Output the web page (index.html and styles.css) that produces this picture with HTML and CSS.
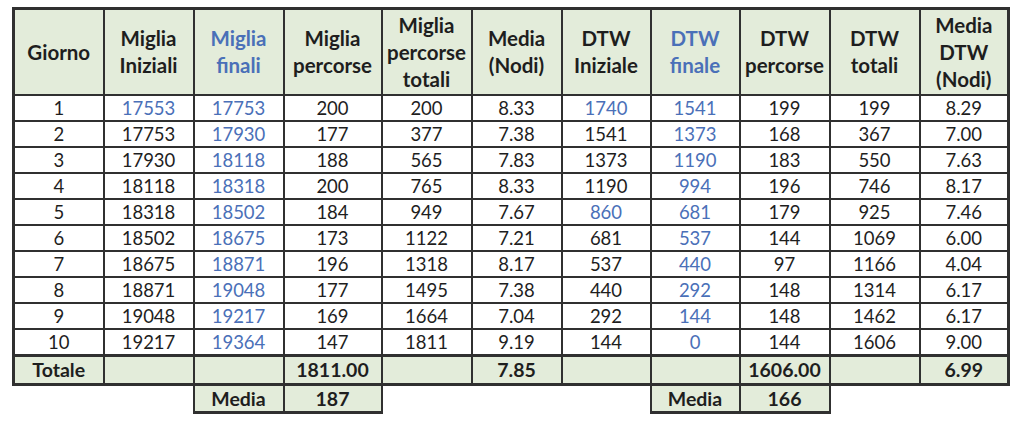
FILE: index.html
```html
<!DOCTYPE html>
<html lang="it">
<head>
<meta charset="utf-8">
<title>Tabella miglia</title>
<link rel="stylesheet" href="styles.css">
</head>
<body>
<div class="wrap">
<table class="log">
<colgroup>
<col class="c90"><col class="c90"><col class="c90"><col class="c98"><col class="c90"><col class="c90"><col class="c89"><col class="c89"><col class="c90"><col class="c90"><col class="c89">
</colgroup>
<thead>
<tr class="head">
<th class="first">Giorno</th>
<th>Miglia<br>Iniziali</th>
<th class="blue">Miglia<br>finali</th>
<th>Miglia<br>percorse</th>
<th>Miglia<br>percorse<br>totali</th>
<th>Media<br>(Nodi)</th>
<th>DTW<br>Iniziale</th>
<th class="blue">DTW<br>finale</th>
<th>DTW<br>percorse</th>
<th>DTW<br>totali</th>
<th class="last">Media<br>DTW<br>(Nodi)</th>
</tr>
</thead>
<tbody>
<tr><td class="first">1</td><td class="blue">17553</td><td class="blue">17753</td><td>200</td><td>200</td><td>8.33</td><td class="blue">1740</td><td class="blue">1541</td><td>199</td><td>199</td><td class="last">8.29</td></tr>
<tr><td class="first">2</td><td>17753</td><td class="blue">17930</td><td>177</td><td>377</td><td>7.38</td><td>1541</td><td class="blue">1373</td><td>168</td><td>367</td><td class="last">7.00</td></tr>
<tr><td class="first">3</td><td>17930</td><td class="blue">18118</td><td>188</td><td>565</td><td>7.83</td><td>1373</td><td class="blue">1190</td><td>183</td><td>550</td><td class="last">7.63</td></tr>
<tr><td class="first">4</td><td>18118</td><td class="blue">18318</td><td>200</td><td>765</td><td>8.33</td><td>1190</td><td class="blue">994</td><td>196</td><td>746</td><td class="last">8.17</td></tr>
<tr><td class="first">5</td><td>18318</td><td class="blue">18502</td><td>184</td><td>949</td><td>7.67</td><td class="blue">860</td><td class="blue">681</td><td>179</td><td>925</td><td class="last">7.46</td></tr>
<tr><td class="first">6</td><td>18502</td><td class="blue">18675</td><td>173</td><td>1122</td><td>7.21</td><td>681</td><td class="blue">537</td><td>144</td><td>1069</td><td class="last">6.00</td></tr>
<tr><td class="first">7</td><td>18675</td><td class="blue">18871</td><td>196</td><td>1318</td><td>8.17</td><td>537</td><td class="blue">440</td><td>97</td><td>1166</td><td class="last">4.04</td></tr>
<tr><td class="first">8</td><td>18871</td><td class="blue">19048</td><td>177</td><td>1495</td><td>7.38</td><td>440</td><td class="blue">292</td><td>148</td><td>1314</td><td class="last">6.17</td></tr>
<tr><td class="first">9</td><td>19048</td><td class="blue">19217</td><td>169</td><td>1664</td><td>7.04</td><td>292</td><td class="blue">144</td><td>148</td><td>1462</td><td class="last">6.17</td></tr>
<tr><td class="first">10</td><td>19217</td><td class="blue">19364</td><td>147</td><td>1811</td><td>9.19</td><td>144</td><td class="blue">0</td><td>144</td><td>1606</td><td class="last">9.00</td></tr>
</tbody>
<tfoot>
<tr class="total">
<td class="first">Totale</td><td></td><td></td><td>1811.00</td><td></td><td>7.85</td><td></td><td></td><td>1606.00</td><td></td><td class="last">6.99</td>
</tr>
<tr class="media">
<td class="gap"></td><td class="gap"></td><td class="box lbl">Media</td><td class="box val">187</td><td class="gap"></td><td class="gap"></td><td class="gap"></td><td class="box lbl">Media</td><td class="box val">166</td><td class="gap"></td><td class="gap"></td>
</tr>
</tfoot>
</table>
</div>
</body>
</html>
```
FILE: styles.css
```css
html, body {
  margin: 0;
  padding: 0;
  background: #ffffff;
}

.wrap {
  padding: 7px 0 0 12px;
}

.log {
  border-collapse: collapse;
  table-layout: fixed;
  width: 995px;
  font-family: Lato, "Open Sans", sans-serif;
  color: #1e1e1e;
}

.c90 { width: 90px; }
.c98 { width: 98px; }
.c89 { width: 89px; }

.log th,
.log td {
  border: 2px solid #303030;
  text-align: center;
  vertical-align: middle;
  padding: 0 1px;
  white-space: nowrap;
  overflow: hidden;
}

.log th {
  font-size: 20.5px;
  font-weight: 700;
  line-height: 27px;
  background: #e3ecda;
  border-top-width: 3px;
  height: 84px;
}

.log tbody td {
  font-size: 18.5px;
  line-height: 22px;
  height: 24px;
}

.log .first { border-left-width: 3px; }
.log .last { border-right-width: 3px; }

.log .blue { color: #4a70b8; }

.log .total td {
  background: #e3ecda;
  font-weight: 700;
  font-size: 19.5px;
  line-height: 24px;
  height: 26px;
  border-top-width: 3px;
  border-bottom-width: 3px;
}

.log .media td {
  height: 25px;
  font-size: 19.5px;
  font-weight: 700;
  line-height: 24px;
}

.log .media .gap {
  border: none;
  background: transparent;
}

.log .media .box {
  background: #e3ecda;
  border-bottom-width: 3px;
}
```
